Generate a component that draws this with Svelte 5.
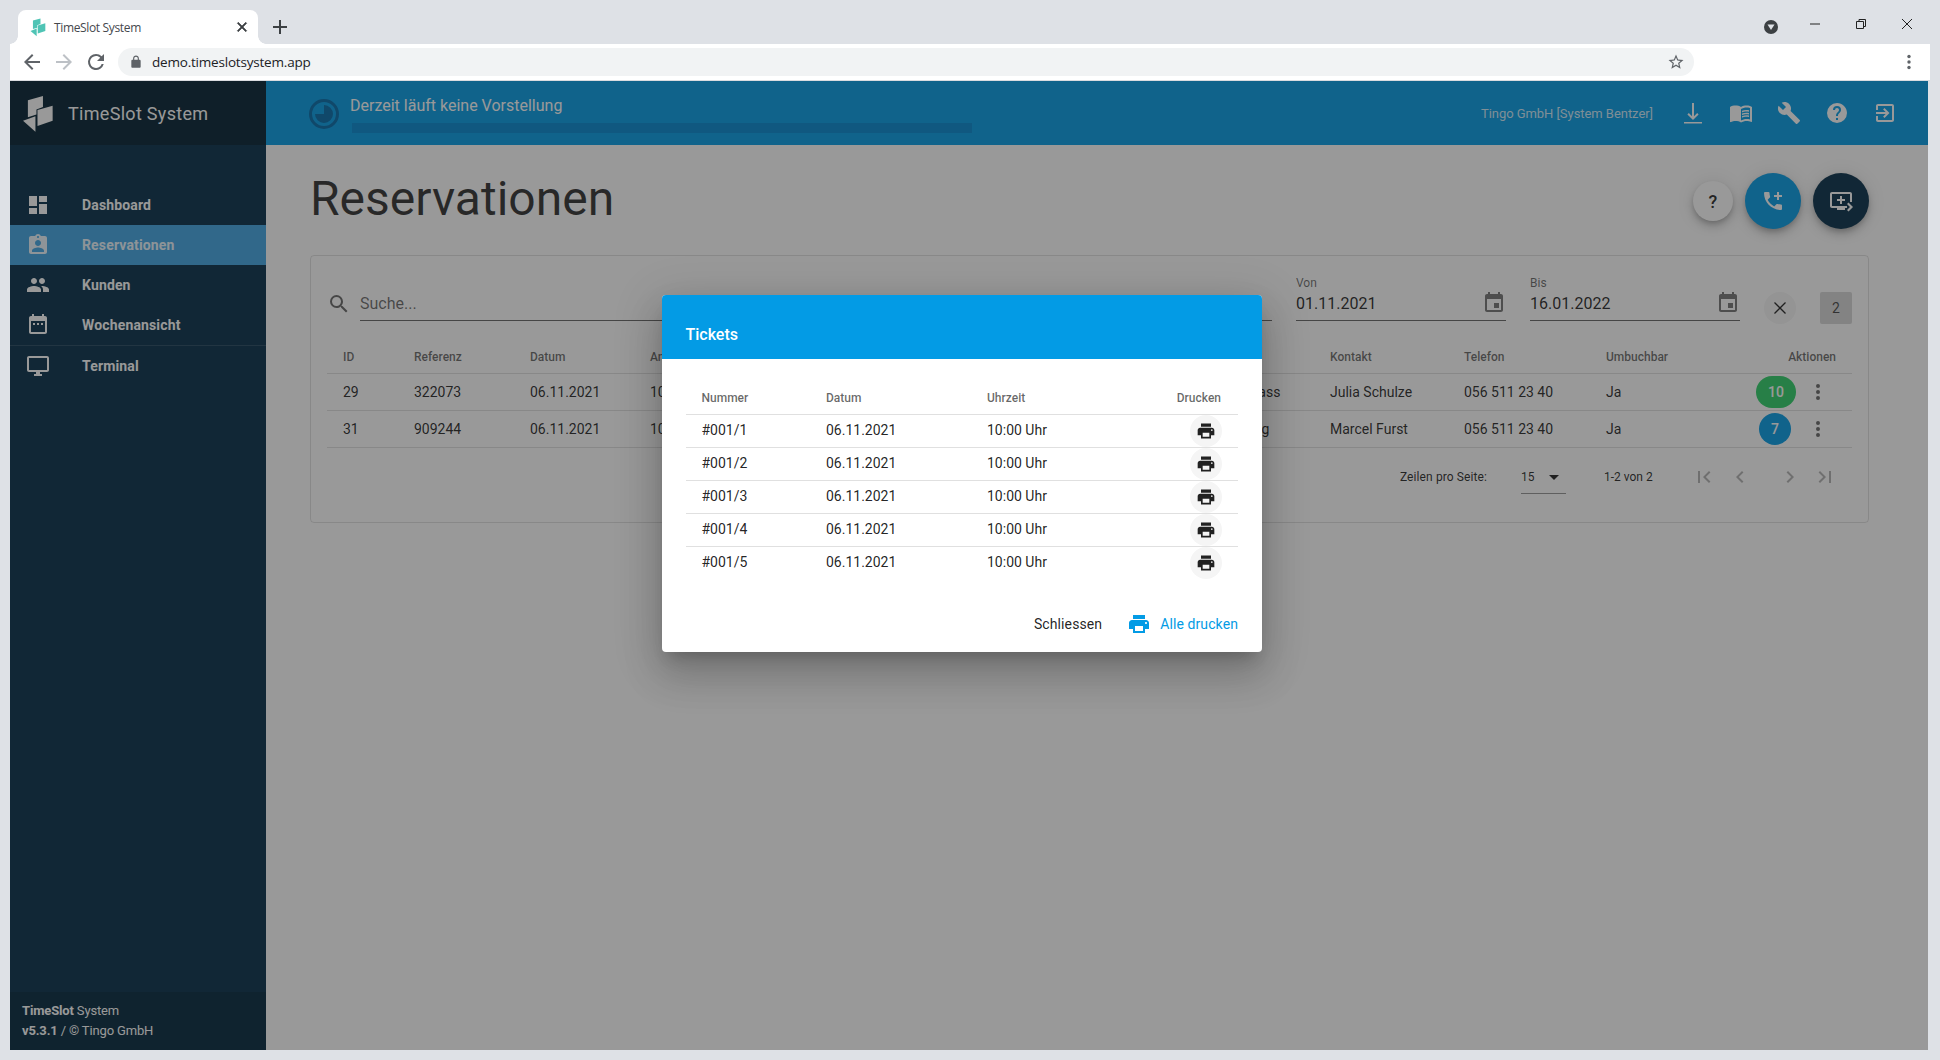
<script>
  const p = {
    dash: 'M13,3V9H21V3M13,21H21V11H13M3,21H11V15H3M3,13H11V3H3V13Z',
    res: 'M19 3h-4.18C14.4 1.84 13.3 1 12 1c-1.3 0-2.4.84-2.82 2H5c-1.1 0-2 .9-2 2v14c0 1.1.9 2 2 2h14c1.1 0 2-.9 2-2V5c0-1.1-.9-2-2-2zm-7 0c.55 0 1 .45 1 1s-.45 1-1 1-1-.45-1-1 .45-1 1-1zm0 4c1.66 0 3 1.34 3 3s-1.34 3-3 3-3-1.34-3-3 1.34-3 3-3zm6 12H6v-1.4c0-2 4-3.1 6-3.1s6 1.1 6 3.1V19z',
    people: 'M16 11c1.66 0 2.99-1.34 2.99-3S17.66 5 16 5c-1.66 0-3 1.34-3 3s1.34 3 3 3zm-8 0c1.66 0 2.99-1.34 2.99-3S9.66 5 8 5C6.34 5 5 6.34 5 8s1.34 3 3 3zm0 2c-2.33 0-7 1.17-7 3.5V19h14v-2.5c0-2.33-4.67-3.5-7-3.5zm8 0c-.29 0-.62.02-.97.05 1.16.84 1.97 1.97 1.97 3.45V19h6v-2.5c0-2.33-4.67-3.5-7-3.5z',
    week: 'M19 3h-1V1h-2v2H8V1H6v2H5c-1.11 0-1.99.9-1.99 2L3 19c0 1.1.89 2 2 2h14c1.1 0 2-.9 2-2V5c0-1.1-.9-2-2-2zm0 16H5V8h14v11zM9 10H7v2h2zm4 0h-2v2h2zm4 0h-2v2h2z',
    desk: 'M21 2H3c-1.1 0-2 .9-2 2v12c0 1.1.9 2 2 2h7v2H8v2h8v-2h-2v-2h7c1.1 0 2-.9 2-2V4c0-1.1-.9-2-2-2zm0 14H3V4h18v12z',
    event: 'M17 12h-5v5h5v-5zM16 1v2H8V1H6v2H5c-1.11 0-1.99.9-1.99 2L3 19c0 1.1.89 2 2 2h14c1.1 0 2-.9 2-2V5c0-1.1-.9-2-2-2h-1V1h-2zm3 18H5V8h14v11z',
    down: 'M11 2h2v13.2l3.2-3.2L17.6 13.4 12 19l-5.6-5.6L7.8 12l3.2 3.2zM3 21h18v1.6H3z',
    book: 'M21,5C19.89,4.65 18.67,4.5 17.5,4.5C15.55,4.5 13.45,4.9 12,6C10.55,4.9 8.45,4.5 6.5,4.5C4.55,4.5 2.45,4.9 1,6V20.65C1,20.9 1.25,21.15 1.5,21.15C1.6,21.15 1.65,21.1 1.75,21.1C3.1,20.45 5.05,20 6.5,20C8.45,20 10.55,20.4 12,21.5C13.35,20.65 15.8,20 17.5,20C19.15,20 20.85,20.3 22.25,21.05C22.35,21.1 22.4,21.1 22.5,21.1C22.75,21.1 23,20.85 23,20.6V6C22.4,5.55 21.75,5.25 21,5M21,18.5C19.9,18.15 18.7,18 17.5,18C15.8,18 13.35,18.65 12,19.5V8C13.35,7.15 15.8,6.5 17.5,6.5C18.7,6.5 19.9,6.65 21,7V18.5M17.5,10.5C18.38,10.5 19.23,10.59 20,10.76V9.24C19.21,9.09 18.36,9 17.5,9C15.8,9 14.26,9.29 13,9.83V11.5C14.13,10.85 15.7,10.5 17.5,10.5M13,12.49V14.15C14.13,13.5 15.7,13.15 17.5,13.15C18.38,13.15 19.23,13.24 20,13.41V11.89C19.21,11.74 18.36,11.65 17.5,11.65C15.8,11.65 14.26,11.95 13,12.49M17.5,14.33C15.8,14.33 14.26,14.63 13,15.17V16.83C14.13,16.18 15.7,15.83 17.5,15.83C18.38,15.83 19.23,15.92 20,16.09V14.57C19.21,14.41 18.36,14.33 17.5,14.33Z',
    wrench: 'M22.7,19L13.6,9.9C14.5,7.6 14,4.9 12.1,3C10.1,1 7.1,0.6 4.7,1.7L9,6L6,9L1.6,4.7C0.4,7.1 0.9,10.1 2.9,12.1C4.8,14 7.5,14.5 9.8,13.6L18.9,22.7C19.3,23.1 19.9,23.1 20.3,22.7L22.6,20.4C23.1,20 23.1,19.3 22.7,19Z',
    help: 'M15.07,11.25L14.17,12.17C13.45,12.89 13,13.5 13,15H11V14.5C11,13.39 11.45,12.39 12.17,11.67L13.41,10.41C13.78,10.05 14,9.55 14,9C14,7.89 13.1,7 12,7A2,2 0 0,0 10,9H8A4,4 0 0,1 12,5A4,4 0 0,1 16,9C16,9.88 15.64,10.67 15.07,11.25M13,19H11V17H13M12,2A10,10 0 0,0 2,12A10,10 0 0,0 12,22A10,10 0 0,0 22,12C22,6.47 17.5,2 12,2Z',
    exit: 'M10.09 15.59L11.5 17l5-5-5-5-1.41 1.41L12.67 11H3v2h9.67l-2.58 2.59zM19 3H5c-1.11 0-2 .9-2 2v4h2V5h14v14H5v-4H3v4c0 1.1.89 2 2 2h14c1.1 0 2-.9 2-2V5c0-1.1-.9-2-2-2z',
    phone: 'M4,3A1,1 0 0,0 3,4C3,13.39 10.61,21 20,21A1,1 0 0,0 21,20V16.5A1,1 0 0,0 20,15.5C18.75,15.5 17.55,15.3 16.43,14.93C16.08,14.82 15.69,14.9 15.41,15.18L13.21,17.38C10.38,15.94 8.06,13.62 6.62,10.79L8.82,8.59C9.1,8.31 9.18,7.92 9.07,7.57C8.7,6.45 8.5,5.25 8.5,4A1,1 0 0,0 7.5,3H4M16,3V6H13V8H16V11H18V8H21V6H18V3H16Z',
    queue: 'M21 3H3c-1.11 0-2 .89-2 2v12c0 1.1.89 2 2 2h5v2h8v-2h2v-2H3V5h18v8h2V5c0-1.11-.9-2-2-2zm-8 7V7h-2v3H8v2h3v3h2v-3h3v-2h-3zm11 8l-4.5 4.5L18 21l3-3-3-3 1.5-1.5L24 18z',
    print: 'M19 8H5c-1.66 0-3 1.34-3 3v6h4v4h12v-4h4v-6c0-1.66-1.34-3-3-3zm-3 11H8v-5h8v5zm3-7c-.55 0-1-.45-1-1s.45-1 1-1 1 .45 1 1-.45 1-1 1zm-1-9H6v4h12V3z',
    search: 'M9.5,3A6.5,6.5 0 0,1 16,9.5C16,11.11 15.41,12.59 14.44,13.73L14.71,14H15.5L20.5,19L19,20.5L14,15.5V14.71L13.73,14.44C12.59,15.41 11.11,16 9.5,16A6.5,6.5 0 0,1 3,9.5A6.5,6.5 0 0,1 9.5,3M9.5,5C7,5 5,7 5,9.5C5,12 7,14 9.5,14C12,14 14,12 14,9.5C14,7 12,5 9.5,5Z',
    close: 'M19,6.41L17.59,5L12,10.59L6.41,5L5,6.41L10.59,12L5,17.59L6.41,19L12,13.41L17.59,19L19,17.59L13.41,12L19,6.41Z',
    dots: 'M12,16A2,2 0 0,1 14,18A2,2 0 0,1 12,20A2,2 0 0,1 10,18A2,2 0 0,1 12,16M12,10A2,2 0 0,1 14,12A2,2 0 0,1 12,14A2,2 0 0,1 10,12A2,2 0 0,1 12,10M12,4A2,2 0 0,1 14,6A2,2 0 0,1 12,8A2,2 0 0,1 10,6A2,2 0 0,1 12,4Z',
    first: 'M18.41,16.59L13.82,12L18.41,7.41L17,6L11,12L17,18L18.41,16.59M6,6H8V18H6V6Z',
    prev: 'M15.41,16.58L10.83,12L15.41,7.41L14,6L8,12L14,18L15.41,16.58Z',
    next: 'M8.59,16.58L13.17,12L8.59,7.41L10,6L16,12L10,18L8.59,16.58Z',
    last: 'M5.59,7.41L10.18,12L5.59,16.59L7,18L13,12L7,6L5.59,7.41M16,6H18V18H16V6Z',
    menu: 'M7,10L12,15L17,10H7Z'
  };
  const nav = [
    { label: 'Dashboard', icon: p.dash },
    { label: 'Reservationen', icon: p.res, active: true },
    { label: 'Kunden', icon: p.people },
    { label: 'Wochenansicht', icon: p.week }
  ];
  const topIcons = [p.down, p.book, p.wrench, p.help, p.exit];
  const reservations = [
    { id: '29', ref: '322073', hall: 'Terrass', name: 'Julia Schulze', count: '10', tone: 'green' },
    { id: '31', ref: '909244', hall: 'Klang', name: 'Marcel Furst', count: '7', tone: 'blue' }
  ];
  const tickets = ['#001/1', '#001/2', '#001/3', '#001/4', '#001/5'];
</script>

{#snippet icon(d, size = 24)}
  <svg class="ic" width={size} height={size} viewBox="0 0 24 24" aria-hidden="true"><path {d} /></svg>
{/snippet}

{#snippet logo(size)}
  <svg class="logo" width={size} height={size * 36 / 31} viewBox="0 0 31 36" aria-hidden="true">
    <polygon points="5.7,5 20.3,1 20.3,11.7 14,14 14,19 5.7,21.5" />
    <polygon points="15,14.5 29.7,10.3 29.7,25 15,30" />
    <polygon points="1,25 13,20.5 13,35.5" />
  </svg>
{/snippet}

<div class="frame">
  <div class="tabstrip">
    <div class="tab">
      <span class="favicon">{@render logo(16)}</span>
      <span class="tabtitle">TimeSlot System</span>
      <svg class="tabx" width="16" height="16" viewBox="0 0 24 24"><path d={p.close} /></svg>
    </div>
    <svg class="newtab" width="24" height="24" viewBox="0 0 24 24"><path d="M11 5h2v6h6v2h-6v6h-2v-6H5v-2h6z" /></svg>
    <div class="winctl">
      <span class="profile"><svg width="14" height="14" viewBox="0 0 14 14"><polygon points="3.5,4.5 10.5,4.5 7,10" fill="#dee1e6" /></svg></span>
      <svg class="wbtn" width="46" height="20" viewBox="0 0 46 20"><path d="M18 10h10" stroke="#222" fill="none" /></svg>
      <svg class="wbtn" width="46" height="20" viewBox="0 0 46 20"><path d="M18.5 7.5h7v7h-7zM21 7.5V5.500h6.500v7H25.500" stroke="#222" fill="none" /></svg>
      <svg class="wbtn" width="46" height="20" viewBox="0 0 46 20"><path d="M18 5l10 10M28 5L18 15" stroke="#222" fill="none" /></svg>
    </div>
  </div>
  <div class="toolbar">
    <svg class="tool" width="24" height="24" viewBox="0 0 24 24"><path fill="#5f6368" d="M20 11H7.830l5.590-5.590L12 4l-8 8 8 8 1.410-1.410L7.830 13H20z" /></svg>
    <svg class="tool" width="24" height="24" viewBox="0 0 24 24"><path fill="#bdc1c6" d="M12 4l-1.410 1.410L16.170 11H4v2h12.170l-5.580 5.590L12 20l8-8z" /></svg>
    <svg class="tool" width="24" height="24" viewBox="0 0 24 24"><path fill="#5f6368" d="M17.650 6.350A7.960 7.960 0 0 0 12 4a8 8 0 1 0 7.730 10h-2.080A6 6 0 1 1 12 6c1.660 0 3.140.69 4.220 1.780L13 11h7V4z" /></svg>
    <div class="omni">
      <svg width="14" height="14" viewBox="0 0 24 24"><path fill="#5f6368" d="M18 8h-1V6c0-2.760-2.240-5-5-5S7 3.240 7 6v2H6c-1.100 0-2 .9-2 2v10c0 1.100.9 2 2 2h12c1.100 0 2-.9 2-2V10c0-1.100-.9-2-2-2zM9 6c0-1.660 1.340-3 3-3s3 1.340 3 3v2H9z" /></svg>
      <span class="url">demo.timeslotsystem.app</span>
      <svg class="star" width="18" height="18" viewBox="0 0 24 24"><path fill="#5f6368" d="M22 9.240l-7.190-.62L12 2 9.190 8.630 2 9.240l5.460 4.730L5.820 21 12 17.270 18.180 21l-1.630-7.030L22 9.240zM12 15.400l-3.760 2.270 1-4.280-3.320-2.880 4.380-.38L12 6.100l1.710 4.040 4.380.38-3.320 2.880 1 4.280L12 15.400z" /></svg>
    </div>
    <svg class="menu" width="24" height="24" viewBox="0 0 24 24"><circle cx="12" cy="6.500" r="1.700" /><circle cx="12" cy="12" r="1.700" /><circle cx="12" cy="17.500" r="1.700" /></svg>
  </div>

  <div class="page">
    <aside class="sidebar">
      <div class="brand">
        <span class="brandlogo">{@render logo(32)}</span>
        <span class="brandname">TimeSlot System</span>
      </div>
      <nav class="nav">
        {#each nav as item}
          <div class="navitem" class:active={item.active}>
            {@render icon(item.icon)}
            <span>{item.label}</span>
          </div>
        {/each}
        <div class="navdivider"></div>
        <div class="navitem">
          {@render icon(p.desk)}
          <span>Terminal</span>
        </div>
      </nav>
      <div class="sidefoot">
        <div><b>TimeSlot</b> System</div>
        <div><b>v5.3.1</b> / © Tingo GmbH</div>
      </div>
    </aside>

    <div class="main">
      <header class="appbar">
        <svg class="clock" width="32" height="32" viewBox="0 0 32 32">
          <circle cx="16" cy="16" r="13.500" />
          <path d="M16 7a9 9 0 1 1-9 9h9z" />
        </svg>
        <div class="status">
          <div class="statustext">Derzeit läuft keine Vorstellung</div>
          <div class="statusbar"></div>
        </div>
        <div class="user">Tingo GmbH [System Bentzer]</div>
        <div class="topicons">
          {#each topIcons as d}
            <span class="topicon">{@render icon(d)}</span>
          {/each}
        </div>
      </header>

      <section class="content">
        <div class="titlerow">
          <h1>Reservationen</h1>
          <div class="fabs">
            <button class="fab small">?</button>
            <button class="fab phone">{@render icon(p.phone)}</button>
            <button class="fab screen">{@render icon(p.queue)}</button>
          </div>
        </div>

        <div class="card">
          <div class="filters">
            <div class="searchbox">
              <span class="searchicon">{@render icon(p.search)}</span>
              <div class="field grow"><div class="value ph">Suche...</div></div>
            </div>
            <div class="field date">
              <div class="label">Von</div>
              <div class="value">01.11.2021 {@render icon(p.event)}</div>
            </div>
            <div class="field date">
              <div class="label">Bis</div>
              <div class="value">16.01.2022 {@render icon(p.event)}</div>
            </div>
            <button class="clear"><svg width="24" height="24" viewBox="0 0 24 24" fill="none" stroke="currentColor" stroke-width="1.300"><path d="M6.500 6.500l11 11M17.500 6.500l-11 11" /></svg></button>
            <button class="count">2</button>
          </div>

          <div class="trow thead">
            <span>ID</span><span>Referenz</span><span>Datum</span><span>Anfang</span><span>Plätze</span><span>Saal</span><span>Kontakt</span><span>Telefon</span><span>Umbuchbar</span><span class="right">Aktionen</span>
          </div>
          {#each reservations as r}
            <div class="trow">
              <span>{r.id}</span><span>{r.ref}</span><span>06.11.2021</span><span>10:00 Uhr</span><span>2</span><span>{r.hall}</span><span>{r.name}</span><span>056 511 23 40</span><span>Ja</span>
              <span class="actions">
                <span class="chip {r.tone}">{r.count}</span>
                <span class="dots">{@render icon(p.dots)}</span>
              </span>
            </div>
          {/each}

          <div class="pager">
            <span class="rpp">Zeilen pro Seite:</span>
            <span class="select"><span>15</span>{@render icon(p.menu)}</span>
            <span class="range">1-2 von 2</span>
            <span class="pg first">{@render icon(p.first)}</span>
            <span class="pg prev">{@render icon(p.prev)}</span>
            <span class="pg next">{@render icon(p.next)}</span>
            <span class="pg last">{@render icon(p.last)}</span>
          </div>
        </div>
      </section>
    </div>

    <div class="overlay"></div>

    <div class="dialog">
      <div class="dhead">Tickets</div>
      <div class="dbody">
        <div class="drow dth">
          <span>Nummer</span><span>Datum</span><span>Uhrzeit</span><span class="right">Drucken</span>
        </div>
        {#each tickets as t}
          <div class="drow">
            <span>{t}</span><span>06.11.2021</span><span>10:00 Uhr</span>
            <span class="right"><span class="printbtn">{@render icon(p.print, 20)}</span></span>
          </div>
        {/each}
      </div>
      <div class="dfoot">
        <button class="dbtn">Schliessen</button>
        <button class="dbtn primary">{@render icon(p.print)}Alle drucken</button>
      </div>
    </div>
  </div>
</div>

<style>
  :global(body) {
    margin: 0;
    background: #dee1e6;
    font-family: Roboto, "Noto Sans", sans-serif;
  }
  .frame {
    width: 1940px;
    height: 1060px;
    overflow: hidden;
    background: #dee1e6;
  }
  .ic { display: block; fill: currentColor; flex: none; }
  button { font: inherit; border: 0; padding: 0; background: none; color: inherit; }

  /* browser chrome */
  .tabstrip { height: 44px; display: flex; align-items: flex-end; padding-left: 18px; }
  .tab {
    position: relative;
    width: 240px;
    height: 34px;
    box-sizing: border-box;
    background: #fff;
    border-radius: 8px 8px 0 0;
    display: flex;
    align-items: center;
    padding-left: 12px;
  }
  .tab::before, .tab::after {
    content: "";
    position: absolute;
    bottom: 0;
    width: 8px;
    height: 8px;
  }
  .tab::before { left: -8px; background: radial-gradient(circle at 0 0, #dee1e6 7.5px, #fff 8px); }
  .tab::after { right: -8px; background: radial-gradient(circle at 100% 0, #dee1e6 7.5px, #fff 8px); }
  .favicon { display: flex; width: 16px; height: 18px; }
  .favicon :global(polygon) { fill: #4fc4b5; }
  .tabtitle { margin-left: 8px; font: 12px "Open Sans", sans-serif; color: #45484d; letter-spacing: -0.35px; }
  .tabx { margin-left: auto; margin-right: 8px; fill: #3c4043; stroke: #3c4043; stroke-width: 1; }
  .newtab { margin-left: 10px; margin-bottom: 5px; fill: #3c4043; }
  .winctl { margin-left: auto; display: flex; align-items: center; align-self: flex-start; height: 44px; }
  .profile {
    width: 14px; height: 14px; border-radius: 50%; background: #3c4043; display: block; margin-right: 14px; margin-top: 10px;
  }
  .profile svg { display: block; }
  .wbtn { display: block; margin-top: 4px; }
  .winctl .wbtn:last-child { margin-right: 10px; }
  .toolbar {
    margin-left: 10px;
    width: 1920px;
    height: 37px;
    box-sizing: border-box;
    background: #fff;
    border-bottom: 1px solid #dadce0;
    display: flex;
    align-items: center;
    padding: 0 10px;
    gap: 8px;
  }
  .tool { display: block; fill: #5f6368; }
  .omni {
    margin-left: 2px;
    width: 1576px;
    height: 28px;
    box-sizing: border-box;
    border-radius: 14px;
    background: #f1f3f4;
    display: flex;
    align-items: center;
    padding-left: 11px;
  }
  .url { margin-left: 9px; font: 13.5px "Open Sans", sans-serif; color: #202124; letter-spacing: -0.2px; }
  .star { margin-left: auto; margin-right: 9px; }
  .menu { margin-left: auto; fill: #5f6368; margin-right: -1px; }

  /* app */
  .page {
    position: relative;
    margin-left: 10px;
    width: 1918px;
    height: 969px;
    display: flex;
    background: #fff;
    overflow: hidden;
  }
  .overlay { position: absolute; inset: 0; background: rgba(33, 33, 33, 0.46); }

  .sidebar { width: 256px; flex: none; background: #052e48; color: #fff; display: flex; flex-direction: column; }
  .brand { height: 64px; background: #001f30; display: flex; align-items: center; padding-left: 12px; }
  .brandlogo { display: block; margin-top: 1px; }
  .logo { display: block; fill: #fff; }
  .brandname { margin-left: 14px; font-size: 18px; letter-spacing: 0.3px; }
  .nav { padding-top: 40px; }
  .navitem { height: 40px; display: flex; align-items: center; padding-left: 16px; font-size: 14px; font-weight: 700; letter-spacing: 0.15px; }
  .navitem span { margin-left: 32px; }
  .navitem.active { background: #3fa5e4; color: #eaf6fd; }
  .navdivider { height: 1px; background: rgba(255, 255, 255, 0.12); }
  .sidefoot {
    margin-top: auto;
    height: 58px;
    box-sizing: border-box;
    padding: 9px 0 0 12px;
    background: #00253b;
    font-size: 13px;
    letter-spacing: -0.15px;
    line-height: 20px;
  }
  .sidefoot b { font-weight: 700; }

  .main { flex: 1; min-width: 0; display: flex; flex-direction: column; }
  .appbar { height: 64px; flex: none; background: #039be5; color: #fff; display: flex; align-items: center; padding-left: 42px; padding-right: 19px; }
  .clock { display: block; flex: none; margin-top: 1px; }
  .clock circle { fill: none; stroke: #026aa8; stroke-width: 3; }
  .clock path { fill: #026aa8; }
  .status { margin-left: 10px; width: 622px; align-self: flex-start; padding-top: 15px; }
  .statustext { font-size: 16px; line-height: 20px; }
  .statusbar { margin: 7px 0 0 2px; height: 10px; background: #0288d1; }
  .user { margin-left: auto; font-size: 13px; letter-spacing: -0.05px; color: rgba(255, 255, 255, 0.82); }
  .topicons { display: flex; margin-left: 16px; }
  .topicon { width: 48px; display: flex; justify-content: center; }

  .content { padding: 0 59px 0 44px; }
  .titlerow { height: 110px; display: flex; align-items: center; justify-content: space-between; }
  h1 { margin: 0 0 3px; font-size: 48px; font-weight: 400; color: rgba(0, 0, 0, 0.82); }
  .fabs { display: flex; align-items: center; gap: 12px; margin-top: 2px; }
  .fab { display: flex; align-items: center; justify-content: center; border-radius: 50%; width: 56px; height: 56px; color: #fff; box-shadow: 0 3px 5px -1px rgba(0,0,0,.2), 0 6px 10px 0 rgba(0,0,0,.14), 0 1px 18px 0 rgba(0,0,0,.12); }
  .fab.small { width: 40px; height: 40px; background: #fff; color: rgba(0,0,0,.87); font-size: 18px; font-weight: 500; }
  .fab.phone { background: #039be5; }
  .fab.screen { background: #052e48; }

  .card { height: 268px; box-sizing: border-box; border: 1px solid rgba(0, 0, 0, 0.12); border-radius: 4px; padding: 16px; color: rgba(0, 0, 0, 0.87); }
  .filters { display: flex; gap: 24px; height: 52px; margin-bottom: 17px; }
  .searchbox { flex: 1; display: flex; min-width: 0; }
  .searchicon { width: 33px; flex: none; height: 49px; display: flex; align-items: flex-end; padding-bottom: 5px; box-sizing: border-box; color: rgba(0,0,0,.6); margin-top: 0; }
  .field { height: 49px; display: flex; flex-direction: column; justify-content: flex-end; }
  .field.grow { flex: 1; }
  .field.date { width: 210px; flex: none; }
  .label { font-size: 12px; line-height: 16px; color: rgba(0, 0, 0, 0.6); }
  .value { display: flex; align-items: center; justify-content: space-between; height: 24px; padding-bottom: 5px; border-bottom: 1px solid rgba(0, 0, 0, 0.6); font-size: 16px; letter-spacing: 0; }
  .value :global(svg) { color: rgba(0,0,0,.54); }
  .value.ph { color: rgba(0, 0, 0, 0.6); }
  .clear { margin-top: 20px; width: 32px; height: 32px; border-radius: 50%; background: #f5f5f5; display: flex; align-items: center; justify-content: center; color: rgba(0,0,0,.87); }
  .count { margin-top: 20px; width: 32px; height: 32px; border-radius: 2px; background: #d6d6d6; font-size: 14px; color: rgba(0,0,0,.7); }

  .trow {
    display: grid;
    grid-template-columns: 71px 116px 120px 260px 324px 96px 134px 142px 1fr 180px;
    align-items: center;
    height: 37px;
    box-sizing: border-box;
    border-bottom: 1px solid rgba(0, 0, 0, 0.12);
    font-size: 14px;
  }
  .trow > span { padding-left: 16px; white-space: nowrap; }
  .thead { height: 33px; font-size: 12px; font-weight: 500; color: rgba(0, 0, 0, 0.6); }
  .trow > .right { text-align: right; padding-right: 16px; padding-left: 0; }
  .trow > .actions { display: flex; align-items: center; justify-content: flex-end; padding: 0 22px 0 0; }
  .chip { height: 32px; min-width: 32px; border-radius: 16px; display: flex; align-items: center; justify-content: center; color: #fff; font-weight: 500; }
  .chip.green { width: 40px; background: #2ed068; margin-right: 10px; }
  .chip.blue { background: #039be5; margin-right: 15px; }
  .dots { width: 24px; color: rgba(0,0,0,.6); }

  .pager { display: flex; align-items: center; justify-content: flex-end; height: 58px; padding-right: 15px; font-size: 12px; }
  .rpp { letter-spacing: 0.1px; }
  .select { display: flex; align-items: center; margin-left: 34px; width: 45px; height: 33px; box-sizing: border-box; border-bottom: 1px solid rgba(0,0,0,.42); justify-content: space-between; padding-right: 0; }
  .range { margin-left: 38px; width: 50px; }
  .pg { display: block; color: rgba(0,0,0,.3); }
  .pg.first { margin-left: 38px; }
  .pg.prev { margin-left: 12px; }
  .pg.next { margin-left: 26px; }
  .pg.last { margin-left: 11px; }

  .dialog {
    position: absolute;
    left: 652px;
    top: 214px;
    width: 600px;
    height: 357px;
    background: #fff;
    border-radius: 4px;
    overflow: hidden;
    box-shadow: 0 11px 15px -7px rgba(0,0,0,.2), 0 24px 38px 3px rgba(0,0,0,.14), 0 9px 46px 8px rgba(0,0,0,.12);
    display: flex;
    flex-direction: column;
  }
  .dhead { height: 64px; flex: none; box-sizing: border-box; background: #039be5; color: #fff; padding: 28px 23.5px 0; font-size: 16px; font-weight: 500; line-height: 24px; }
  .dbody { padding: 22px 24px 0; }
  .drow {
    display: grid;
    grid-template-columns: 124px 161px 1fr 100px;
    align-items: center;
    height: 33px;
    box-sizing: border-box;
    border-bottom: 1px solid rgba(0, 0, 0, 0.12);
    font-size: 14px;
    color: rgba(0, 0, 0, 0.87);
  }
  .drow:last-child { border-bottom: 0; height: 32px; }
  .drow > span { padding: 0 0 2px 16px; }
  .drow > span:first-child { padding-left: 15.5px; }
  .drow > .right { padding: 0 16px 0 0; text-align: right; display: flex; justify-content: flex-end; }
  .dth { height: 34px; font-size: 12px; font-weight: 500; color: rgba(0, 0, 0, 0.6); }
  .dth > span { padding-bottom: 0; }
  .dth > .right { padding-right: 17px; }
  .printbtn { width: 32px; height: 32px; border-radius: 50%; background: #f5f5f5; display: flex; align-items: center; justify-content: center; color: #212121; }
  .dfoot { margin-top: auto; height: 46px; flex: none; display: flex; justify-content: flex-end; align-items: flex-start; padding-right: 24px; gap: 25px; }
  .dbtn { display: flex; align-items: center; height: 36px; font-size: 14px; font-weight: 400; letter-spacing: 0.1px; color: rgba(0,0,0,.87); }
  .dbtn.primary { color: #039be5; gap: 9px; }
</style>
